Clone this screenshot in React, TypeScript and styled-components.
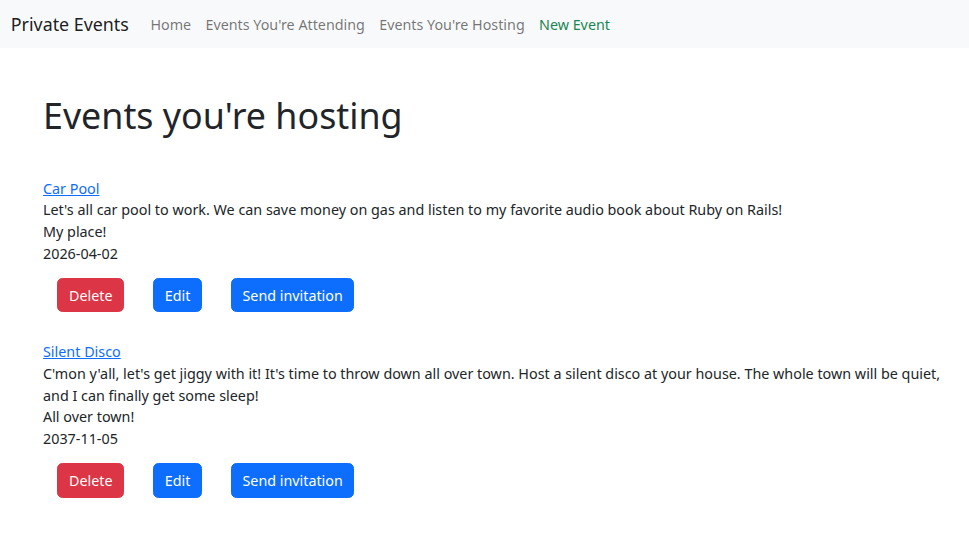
import React from "react";
import styled, { createGlobalStyle } from "styled-components";

const GlobalStyle = createGlobalStyle`
  html, body {
    margin: 0;
    padding: 0;
    background: #ffffff;
  }
  body {
    font-family: "Noto Sans", "Liberation Sans", sans-serif;
    font-size: 14.35px;
    line-height: 21.6px;
    color: #212529;
  }
  * { box-sizing: border-box; }
`;

const NavBar = styled.nav`
  height: 48px;
  background: #f8f9fa;
  display: flex;
  align-items: center;
  padding: 0 10.8px;
`;

const Brand = styled.a`
  font-size: 17.85px;
  line-height: 27px;
  color: rgba(0, 0, 0, 0.9);
  text-decoration: none;
  margin-right: 14.4px;
`;

const NavList = styled.div`
  display: flex;
  align-items: center;
  padding-top: 1px;
`;

const NavLink = styled.a<{ $tone?: "muted" | "success" }>`
  padding: 7.2px;
  line-height: 21.6px;
  font-size: 14.3px;
  text-decoration: none;
  color: ${(p) => (p.$tone === "success" ? "#198754" : "rgba(0, 0, 0, 0.55)")};
`;

const Main = styled.main`
  padding: 46px 20px 40px 43px;
`;

const Title = styled.h1`
  font-size: 35.8px;
  line-height: 43.2px;
  font-weight: 400;
  margin: 0 0 40.6px;
`;

const EventList = styled.div`
  display: flex;
  flex-direction: column;
  gap: 29px;
`;

const EventItem = styled.section`
  display: flex;
  flex-direction: column;
  align-items: flex-start;
`;

const EventLink = styled.a`
  color: #0d6efd;
  text-decoration: underline;
`;

const Line = styled.div``;

const Actions = styled.div`
  display: flex;
  gap: 28.8px;
  padding: 13.6px 14.4px 0;
`;

const Button = styled.button<{ $variant: "danger" | "primary" }>`
  font-family: "Noto Sans", "Liberation Sans", sans-serif;
  font-size: 14.3px;
  line-height: 21.6px;
  padding: 6px 10.7px 5px;
  height: 34.6px;
  border-radius: 5.4px;
  border: 1px solid ${(p) => (p.$variant === "danger" ? "#dc3545" : "#0d6efd")};
  background: ${(p) => (p.$variant === "danger" ? "#dc3545" : "#0d6efd")};
  color: #ffffff;
  cursor: pointer;
`;

const events = [
  {
    name: "Car Pool",
    description:
      "Let's all car pool to work. We can save money on gas and listen to my favorite audio book about Ruby on Rails!",
    location: "My place!",
    date: "2026-04-02",
  },
  {
    name: "Silent Disco",
    description:
      "C'mon y'all, let's get jiggy with it! It's time to throw down all over town. Host a silent disco at your house. The whole town will be quiet, and I can finally get some sleep!",
    location: "All over town!",
    date: "2037-11-05",
  },
];

export default function App() {
  return (
    <>
      <GlobalStyle />
      <NavBar>
        <Brand href="#">Private Events</Brand>
        <NavList>
          <NavLink href="#">Home</NavLink>
          <NavLink href="#">Events You're Attending</NavLink>
          <NavLink href="#">Events You're Hosting</NavLink>
          <NavLink href="#" $tone="success">New Event</NavLink>
        </NavList>
      </NavBar>
      <Main>
        <Title>Events you're hosting</Title>
        <EventList>
          {events.map((e) => (
            <EventItem key={e.name}>
              <EventLink href="#">{e.name}</EventLink>
              <Line>{e.description}</Line>
              <Line>{e.location}</Line>
              <Line>{e.date}</Line>
              <Actions>
                <Button $variant="danger">Delete</Button>
                <Button $variant="primary">Edit</Button>
                <Button $variant="primary">Send invitation</Button>
              </Actions>
            </EventItem>
          ))}
        </EventList>
      </Main>
    </>
  );
}
